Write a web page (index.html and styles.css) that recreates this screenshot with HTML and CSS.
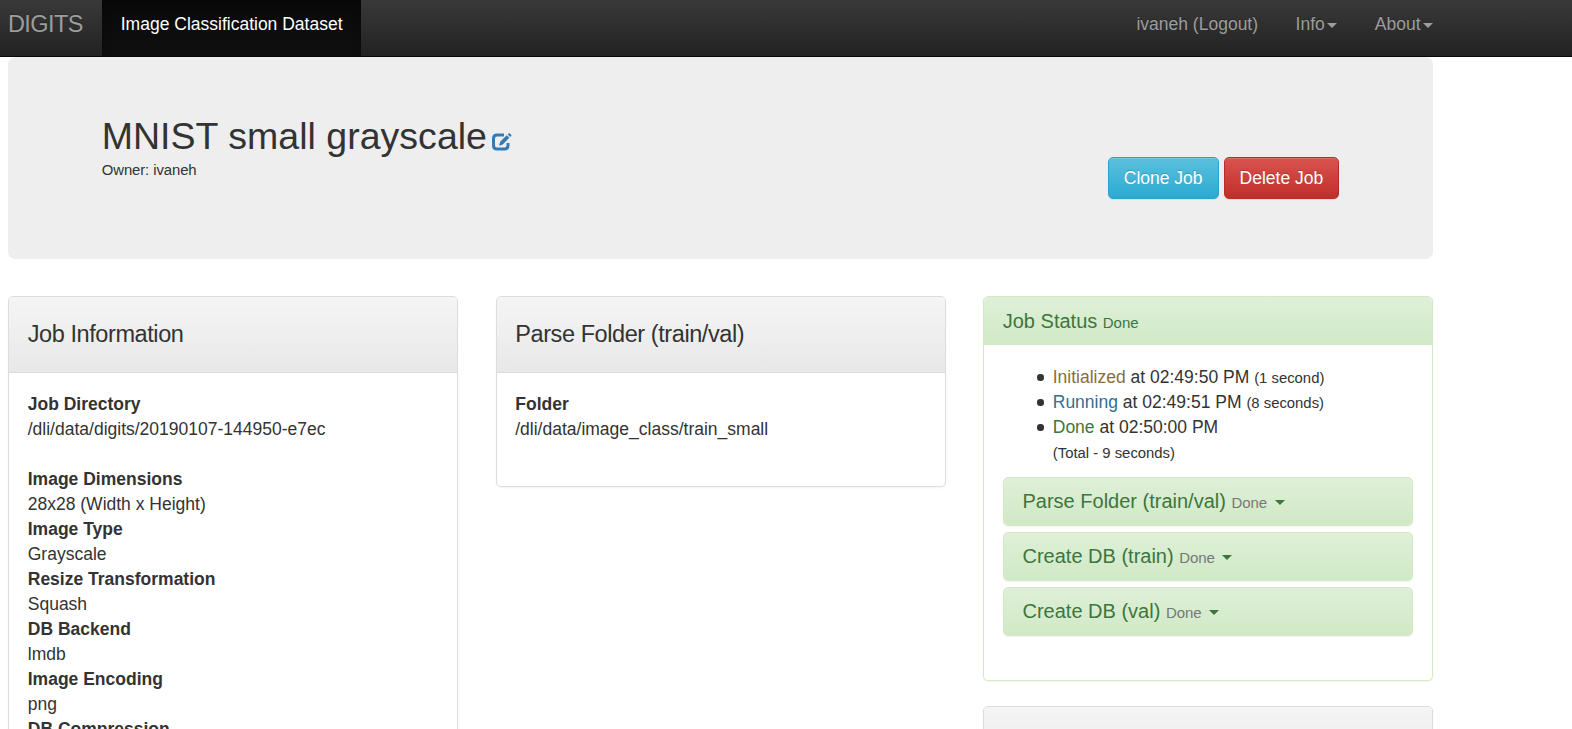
FILE: index.html
```
<!DOCTYPE html>
<html lang="en">
<head>
<meta charset="utf-8">
<title>DIGITS</title>
<link rel="stylesheet" href="styles.css">
</head>
<body>
<nav class="navbar">
  <div class="container navbar-inner">
    <a class="brand">DIGITS</a>
    <a class="nav-item active">Image Classification Dataset</a>
    <div class="nav-right">
      <a class="nav-item">ivaneh (Logout)</a>
      <a class="nav-item">Info<b class="caret"></b></a>
      <a class="nav-item last">About<b class="caret"></b></a>
    </div>
  </div>
</nav>
<main class="container">
  <header class="jumbotron">
    <div>
      <h2>MNIST small grayscale<svg class="edit" viewBox="0 0 20 18"><path d="M12 2H5Q1.5 2 1.5 5.500V12.500Q1.500 16 5 16H12.500Q16 16 16 12.500V10" fill="none" stroke="currentColor" stroke-width="3"/><path d="M7 12.800L8.200 8.800L14.700 2.200L17.300 4.800L10.800 11.400ZM15.600 1.300L16.500 .4Q17.200-.1 17.900.5L19.200 1.800Q19.700 2.500 19.100 3.100L18.200 3.900Z" fill="currentColor"/></svg></h2>
      <p class="owner">Owner: ivaneh</p>
    </div>
    <div class="actions">
      <a class="btn btn-info">Clone Job</a>
      <a class="btn btn-danger">Delete Job</a>
    </div>
  </header>
  <div class="columns">
    <section class="panel">
      <div class="panel-heading"><h4>Job Information</h4></div>
      <div class="panel-body">
        <dl>
          <dt>Job Directory</dt><dd>/dli/data/digits/20190107-144950-e7ec</dd>
        </dl>
        <dl>
          <dt>Image Dimensions</dt><dd>28x28 (Width x Height)</dd>
          <dt>Image Type</dt><dd>Grayscale</dd>
          <dt>Resize Transformation</dt><dd>Squash</dd>
          <dt>DB Backend</dt><dd>lmdb</dd>
          <dt>Image Encoding</dt><dd>png</dd>
          <dt>DB Compression</dt>
        </dl>
      </div>
    </section>
    <section class="panel">
      <div class="panel-heading"><h4>Parse Folder (train/val)</h4></div>
      <div class="panel-body">
        <dl><dt>Folder</dt><dd>/dli/data/image_class/train_small</dd></dl>
      </div>
    </section>
    <div class="side">
      <section class="panel success">
        <div class="panel-heading"><h4 class="panel-title">Job Status <small>Done</small></h4></div>
        <div class="panel-body">
          <ul>
            <li><span class="warning">Initialized</span> at 02:49:50 PM <small>(1 second)</small></li>
            <li><span class="info">Running</span> at 02:49:51 PM <small>(8 seconds)</small></li>
            <li><span class="done">Done</span> at 02:50:00 PM</li>
          </ul>
          <div class="total">(Total - 9 seconds)</div>
          <div class="tasks">
            <div class="task"><h4 class="panel-title">Parse Folder (train/val) <small>Done</small><b class="caret"></b></h4></div>
            <div class="task"><h4 class="panel-title">Create DB (train) <small>Done</small><b class="caret"></b></h4></div>
            <div class="task"><h4 class="panel-title">Create DB (val) <small>Done</small><b class="caret"></b></h4></div>
          </div>
        </div>
      </section>
      <section class="panel"><div class="panel-heading"></div></section>
    </div>
  </div>
</main>
</body>
</html>
```
FILE: styles.css
```
* { box-sizing: border-box; }
html, body { height: 100%; overflow: hidden; }
body {
  margin: 0;
  font: 17.5px/25px "Liberation Sans", Arial, sans-serif;
  color: #333;
  background: #fff;
}
h2, h4, p, dl, dd, ul { margin: 0; padding: 0; font-weight: 400; }
small { font-size: 14.875px; line-height: 1; }
.container { width: 1425px; margin-left: 8px; }

.navbar {
  height: 57px;
  border-bottom: 1px solid #080808;
  background: linear-gradient(#393939, #222);
  color: #9d9d9d;
}
.navbar-inner { display: flex; height: 56px; }
.brand {
  width: 94px;
  padding-top: 12px;
  font-size: 23.5px;
  letter-spacing: -.6px;
  text-shadow: 0 -1px 0 rgba(0, 0, 0, .25);
}
.nav-item {
  display: flex;
  padding: 11.5px 18.75px 0;
  white-space: nowrap;
  text-shadow: 0 -1px 0 rgba(0, 0, 0, .25);
}
.nav-item.last { padding-right: 0; }
.active {
  color: #fff;
  background: linear-gradient(#090909, #0f0f0f);
  box-shadow: inset 0 3px 9px rgba(0, 0, 0, .25);
}
.nav-right { display: flex; margin-left: auto; }
.caret {
  display: inline-block;
  border: 5px solid transparent;
  border-top-color: currentColor;
  border-bottom: 0;
}
.nav-item .caret { margin: 11.5px 0 0 2.5px; }

.jumbotron {
  display: flex;
  justify-content: space-between;
  align-items: flex-end;
  height: 202px;
  padding: 59px 93.75px 60px;
  border-radius: 7.5px;
  background: #eee;
}
.jumbotron > :first-child { align-self: flex-start; }
h2 { display: flex; font-size: 37.5px; line-height: 41.25px; letter-spacing: .02px; }
.edit { width: 20px; height: 18px; margin: 17px 0 0 5px; color: #337ab7; overflow: visible; }
.owner { padding-top: 1px; font-size: 14.875px; letter-spacing: -.08px; }
.actions { display: flex; gap: 5px; }
.btn {
  height: 42px;
  padding: 7.5px 15px;
  border: 1px solid;
  border-radius: 5px;
  color: #fff;
  text-shadow: 0 -1px 0 rgba(0, 0, 0, .2);
  box-shadow: inset 0 1px 0 rgba(255, 255, 255, .15), 0 1px 1px rgba(0, 0, 0, .075);
}
.btn-info { background: linear-gradient(#5bc0de, #2aabd2); border-color: #28a4c9; }
.btn-danger { background: linear-gradient(#d9534f, #c12e2a); border-color: #b92c28; }

.columns {
  display: grid;
  grid-template-columns: repeat(3, 450px);
  gap: 37.5px;
  align-items: start;
  padding-top: 37px;
}
.side { display: grid; gap: 25px; }
.panel {
  border: 1px solid #ddd;
  border-radius: 5px;
  background: #fff;
  box-shadow: 0 1px 2px rgba(0, 0, 0, .05);
}
.panel-heading {
  min-height: 76px;
  padding: 25px 18.75px;
  border-bottom: 1px solid #ddd;
  border-radius: 4px 4px 0 0;
  background: linear-gradient(#f5f5f5, #e8e8e8);
}
h4 { font-size: 23.5px; line-height: 24.75px; letter-spacing: -.42px; }
.panel-body { padding: 18.75px; }
dl { margin-bottom: 25px; }
dt { font-weight: 700; }

.success { border-color: #d6e9c6; }
.success .panel-heading {
  min-height: 0;
  height: 48px;
  padding: 12.5px 18.75px;
  border: 0;
  color: #3c763d;
  background: linear-gradient(#dff0d8, #d0e9c6);
}
.panel-title { font-size: 20px; line-height: 22px; letter-spacing: 0; }
.panel-title small { font-size: 15px; letter-spacing: -.05px; }
ul { padding-top: .75px; list-style: none; }
li { display: flow-root; height: 25px; padding-left: 50px; }
li::before {
  content: "";
  float: left;
  width: 6.500px;
  height: 6.500px;
  margin: 9.500px 0 0 -15.500px;
  border-radius: 50%;
  background: #333;
}
.total { height: 25px; padding: 1px 0 0 50px; font-size: 14.875px; }
.warning { color: #8a6d3b; }
.info { color: #31708f; }
.done { color: #3c763d; }
.tasks { display: grid; gap: 6px; margin: 12.5px 0 24.75px; }
.task {
  height: 49px;
  padding: 12px 18.75px;
  border: 1px solid #d6e9c6;
  border-radius: 5px;
  color: #3c763d;
  background: linear-gradient(#dff0d8, #d0e9c6);
  box-shadow: 0 1px 2px rgba(0, 0, 0, .05);
}
.task small { color: #777; }
.task .caret { margin-left: 7.5px; vertical-align: middle; }
```
